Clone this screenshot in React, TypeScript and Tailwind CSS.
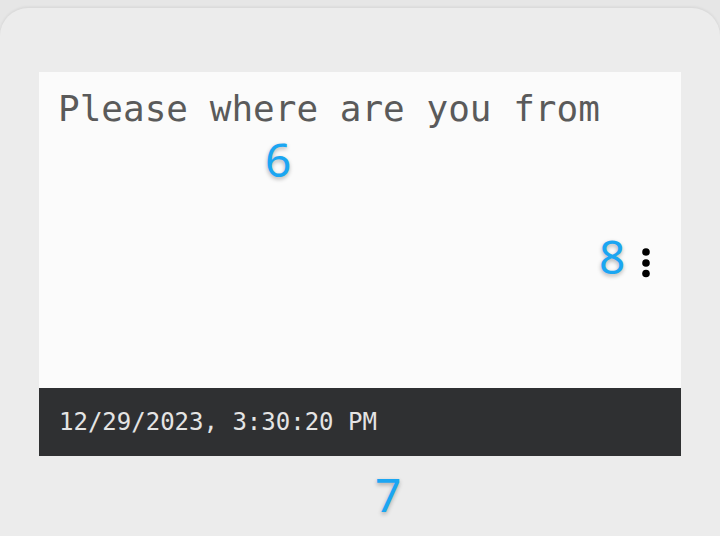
const Marker = ({ n, className }: { n: string; className: string }) => (
  <span
    className={
      "absolute font-['Noto_Sans',sans-serif] text-[46px] leading-none text-[#1ba6f2] [text-shadow:0_2px_4px_rgba(0,0,0,0.3)] " +
      className
    }
  >
    {n}
  </span>
);

export default function App() {
  return (
    <div className="relative h-[536px] w-full overflow-hidden bg-[#e6e6e6] pt-2">
      <div className="h-full rounded-t-[28px] bg-[#ececec] px-[39px] pt-[64px] shadow-[0_-1px_3px_rgba(0,0,0,0.08)]">
        <div className="relative flex h-[316px] flex-col bg-[#fbfbfb] pl-[19px] pt-[19px]">
          <p className="font-['DejaVu_Sans_Mono',monospace] text-[36px] leading-none text-[#5a5a5a]">
            Please where are you from
          </p>
          <svg
            className="absolute left-[603px] top-[176px]"
            width="10"
            height="32"
            viewBox="0 0 10 32"
          >
            <circle cx="4" cy="4" r="3.8" fill="#000" />
            <circle cx="4" cy="15" r="3.8" fill="#000" />
            <circle cx="4" cy="25.5" r="3.8" fill="#000" />
          </svg>
        </div>
        <div className="flex h-[68px] items-center bg-[#2f3032] pl-[20px]">
          <span className="font-['DejaVu_Sans_Mono',monospace] text-[24px] leading-none text-[#e4e4e4]">
            12/29/2023, 3:30:20 PM
          </span>
        </div>
      </div>
      <Marker n="6" className="left-[265px] top-[136px]" />
      <Marker n="8" className="left-[599px] top-[233px]" />
      <Marker n="7" className="left-[375px] top-[471px]" />
    </div>
  );
}
